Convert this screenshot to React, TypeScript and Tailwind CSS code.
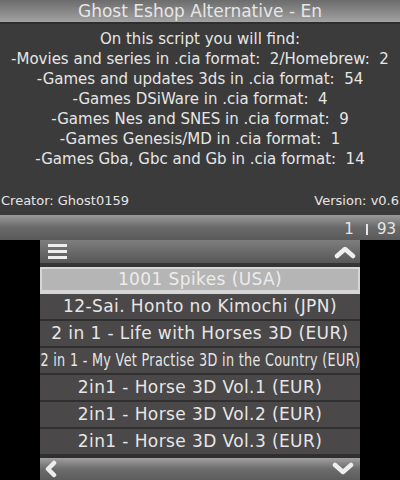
import React, { useLayoutEffect, useRef, useState } from "react";

const lines = [
  "On this script you will find:",
  "-Movies and series in .cia format:  2/Homebrew:  2",
  "-Games and updates 3ds in .cia format:  54",
  "-Games DSiWare in .cia format:  4",
  "-Games Nes and SNES in .cia format:  9",
  "-Games Genesis/MD in .cia format:  1",
  "-Games Gba, Gbc and Gb in .cia format:  14",
];

const rows = [
  "12-Sai. Honto no Kimochi (JPN)",
  "2 in 1 - Life with Horses 3D (EUR)",
  "2 in 1 - My Vet Practise 3D in the Country (EUR)",
  "2in1 - Horse 3D Vol.1 (EUR)",
  "2in1 - Horse 3D Vol.2 (EUR)",
  "2in1 - Horse 3D Vol.3 (EUR)",
];

const font = { fontFamily: '"DejaVu Sans", "Liberation Sans", sans-serif' };

function FitText({ text }: { text: string }) {
  const ref = useRef<HTMLSpanElement>(null);
  const [s, setS] = useState(1);
  useLayoutEffect(() => {
    if (ref.current) {
      const w = ref.current.offsetWidth;
      if (w > 320) setS(320 / w);
    }
  }, [text]);
  return (
    <span
      ref={ref}
      className="inline-block text-[17px] tracking-[0.4px] whitespace-pre"
      style={{ transform: `scaleX(${s})` }}
    >
      {text}
    </span>
  );
}

export default function App() {
  return (
    <div className="w-[400px] h-[480px] bg-black flex flex-col overflow-hidden" style={font}>
      {/* Top screen */}
      <div className="w-[400px] h-[240px] flex flex-col bg-[#3b3b3b] text-[#e6e6e6]">
        <div className="h-[24px] bg-gradient-to-b from-[#6c6c6c] to-[#a2a2a2] border-b-2 border-[#2e2e2e] flex items-center justify-center text-[17px] leading-none">
          Ghost Eshop Alternative - En
        </div>
        <div className="flex-1 flex flex-col items-center pt-[5px] text-[15px] leading-[20px]">
          {lines.map((l) => (
            <div key={l} className="whitespace-pre">{l}</div>
          ))}
        </div>
        <div className="flex justify-between px-[1px] text-[13px] leading-[20px] pb-[4px]">
          <span>Creator: Ghost0159</span>
          <span>Version: v0.6</span>
        </div>
        <div className="h-[25px] bg-gradient-to-b from-[#9a9a9a] via-[#6a6a6a] to-[#5a5a5a] flex items-center justify-end pr-[4px] text-[15px] leading-none pt-[3px]">
          <span>1</span>
          <span className="w-[2px] h-[11px] bg-[#e6e6e6] ml-[12px] mr-[9px]" />
          <span>93</span>
        </div>
      </div>
      {/* Bottom screen */}
      <div className="w-[320px] h-[240px] mx-auto flex flex-col bg-[#4a4848]">
        <div className="h-[27px] bg-gradient-to-b from-[#7e7e7e] to-[#575757] border-b-[4px] border-[#353535] flex items-center justify-between pl-[8px] pr-[4px]">
          <div className="flex flex-col gap-[3px]">
            <div className="w-[19px] h-[3px] bg-[#eeeeee]" />
            <div className="w-[19px] h-[3px] bg-[#eeeeee]" />
            <div className="w-[19px] h-[3px] bg-[#eeeeee]" />
          </div>
          <svg width="22" height="14" viewBox="0 0 22 14">
            <path d="M3 11 L11 4 L19 11" fill="none" stroke="#eeeeee" strokeWidth="4.5" strokeLinecap="round" strokeLinejoin="round" />
          </svg>
        </div>
        <div className="h-[27px] border-2 border-[#d6d6d6] bg-[#b5b5b5] border-b-[4px] flex items-center justify-center text-[17px] tracking-[0.4px] text-[#ececec] leading-none">
          <span>1001 Spikes (USA)</span>
        </div>
        {rows.map((r) => (
          <div
            key={r}
            className="h-[27px] border-b-[2px] border-[#2f2f2f] flex items-center justify-center text-[#e6e6e6] leading-none whitespace-nowrap overflow-hidden"
          >
            <FitText text={r} />
          </div>
        ))}
        <div className="flex-1 bg-gradient-to-b from-[#a0a0a0] via-[#6c6c6c] to-[#5c5c5c] border-t-[2px] border-[#2f2f2f] flex items-center justify-between pl-[4px] pr-[6px]">
          <svg width="14" height="18" viewBox="0 0 14 18">
            <path d="M10 3 L4 9 L10 15" fill="none" stroke="#eeeeee" strokeWidth="4.5" strokeLinecap="round" strokeLinejoin="round" />
          </svg>
          <svg width="22" height="14" viewBox="0 0 22 14">
            <path d="M3 3 L11 10 L19 3" fill="none" stroke="#eeeeee" strokeWidth="4.5" strokeLinecap="round" strokeLinejoin="round" />
          </svg>
        </div>
      </div>
    </div>
  );
}
